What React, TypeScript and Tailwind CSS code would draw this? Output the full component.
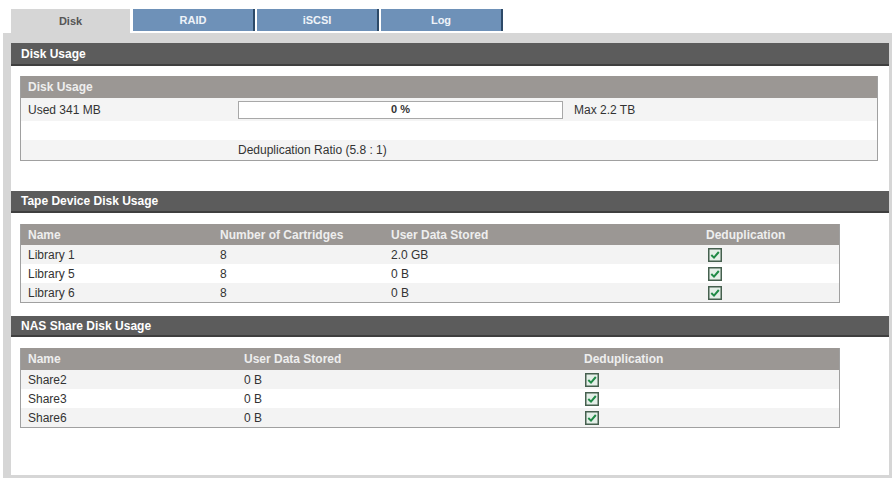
import React from 'react';

const font = { fontFamily: '"Liberation Sans", Arial, sans-serif' };

const tabs = ['Disk', 'RAID', 'iSCSI', 'Log'];

const libraries = [
  { name: 'Library 1', cartridges: '8', stored: '2.0 GB' },
  { name: 'Library 5', cartridges: '8', stored: '0 B' },
  { name: 'Library 6', cartridges: '8', stored: '0 B' },
];

const shares = [
  { name: 'Share2', stored: '0 B' },
  { name: 'Share3', stored: '0 B' },
  { name: 'Share6', stored: '0 B' },
];

function CheckBox() {
  return (
    <svg width="14" height="14" viewBox="0 0 14 14" className="block">
      <rect x="0.75" y="0.75" width="12.5" height="12.5" fill="#e4efe8" stroke="#46604f" strokeWidth="1.5" />
      <path d="M3.3 7 L6 9.6 L10.8 4" fill="none" stroke="#1f8a46" strokeWidth="2" />
    </svg>
  );
}

function SectionBar({ title, className = '' }: { title: string; className?: string }) {
  return (
    <div
      className={`flex items-center bg-[#5c5c5c] border-b-2 border-[#3f3f3f] pl-[10px] text-[12px] font-bold text-white ${className}`}
    >
      {title}
    </div>
  );
}

export default function App() {
  return (
    <div className="w-[892px] h-[481px] bg-white pt-[9px] text-[#333]" style={font}>
      {/* Tabs */}
      <div className="flex items-start pl-[11px] h-[24px]">
        {tabs.map((tab, i) =>
          i === 0 ? (
            <div
              key={tab}
              className="w-[119px] h-[24px] mr-[3px] bg-[#d6d6d6] flex items-center justify-center text-[11px] font-bold text-[#555]"
            >
              {tab}
            </div>
          ) : (
            <div
              key={tab}
              className="w-[122px] h-[22px] mr-[2px] bg-[#6e91b8] border-r-2 border-[#2d4a68] flex items-center justify-center text-[11px] font-bold text-[#eef3f8]"
            >
              {tab}
            </div>
          )
        )}
      </div>

      {/* Panel */}
      <div className="ml-[3px] bg-[#d6d6d6] pl-[8px] pt-[10px] pr-[3px] pb-[3px]">
        <div className="bg-white h-[432px] flex flex-col">
          <SectionBar title="Disk Usage" className="h-[23px]" />

          {/* Disk usage box */}
          <div className="mt-[10px] ml-[9px] mr-[11px] border border-[#a0a0a0] border-t-0">
            <div className="h-[22px] bg-[#9b9794] flex items-center pl-[7px] text-[12px] font-bold text-[#eeeeee]">
              Disk Usage
            </div>
            <div className="h-[23px] bg-[#f4f4f4] flex items-center text-[12px]">
              <div className="w-[217px] pl-[7px]">Used 341 MB</div>
              <div className="w-[325px] h-[18px] border border-[#a8a8a8] bg-white flex items-center justify-center font-bold text-[11px]">
                0 %
              </div>
              <div className="pl-[11px]">Max 2.2 TB</div>
            </div>
            <div className="h-[19px] bg-white" />
            <div className="h-[20px] bg-[#f4f4f4] flex items-center text-[12px]">
              <div className="w-[217px]" />
              <div>Deduplication Ratio (5.8 : 1)</div>
            </div>
          </div>

          <SectionBar title="Tape Device Disk Usage" className="mt-[30px] h-[22px]" />

          {/* Tape table */}
          <div className="mt-[11px] ml-[9px] w-[820px] border border-[#a0a0a0] border-t-0 text-[12px]">
            <div className="h-[21px] bg-[#9b9794] flex items-center font-bold text-[#eeeeee]">
              <div className="w-[192px] pl-[7px]">Name</div>
              <div className="w-[171px] pl-[7px]">Number of Cartridges</div>
              <div className="w-[315px] pl-[7px]">User Data Stored</div>
              <div className="pl-[7px]">Deduplication</div>
            </div>
            {libraries.map((lib, i) => (
              <div
                key={lib.name}
                className={`h-[19px] flex items-center ${i % 2 === 0 ? 'bg-[#f3f3f3]' : 'bg-white'}`}
              >
                <div className="w-[192px] pl-[7px]">{lib.name}</div>
                <div className="w-[171px] pl-[7px]">{lib.cartridges}</div>
                <div className="w-[315px] pl-[7px]">{lib.stored}</div>
                <div className="pl-[9px]">
                  <CheckBox />
                </div>
              </div>
            ))}
          </div>

          <SectionBar title="NAS Share Disk Usage" className="mt-[13px] h-[21px]" />

          {/* NAS table */}
          <div className="mt-[11px] ml-[9px] w-[820px] border border-[#a0a0a0] border-t-0 text-[12px]">
            <div className="h-[22px] bg-[#9b9794] flex items-center font-bold text-[#eeeeee]">
              <div className="w-[216px] pl-[7px]">Name</div>
              <div className="w-[340px] pl-[7px]">User Data Stored</div>
              <div className="pl-[7px]">Deduplication</div>
            </div>
            {shares.map((share, i) => (
              <div
                key={share.name}
                className={`h-[19px] flex items-center ${i % 2 === 0 ? 'bg-[#f3f3f3]' : 'bg-white'}`}
              >
                <div className="w-[216px] pl-[7px]">{share.name}</div>
                <div className="w-[340px] pl-[7px]">{share.stored}</div>
                <div className="pl-[8px]">
                  <CheckBox />
                </div>
              </div>
            ))}
          </div>
        </div>
      </div>
    </div>
  );
}
